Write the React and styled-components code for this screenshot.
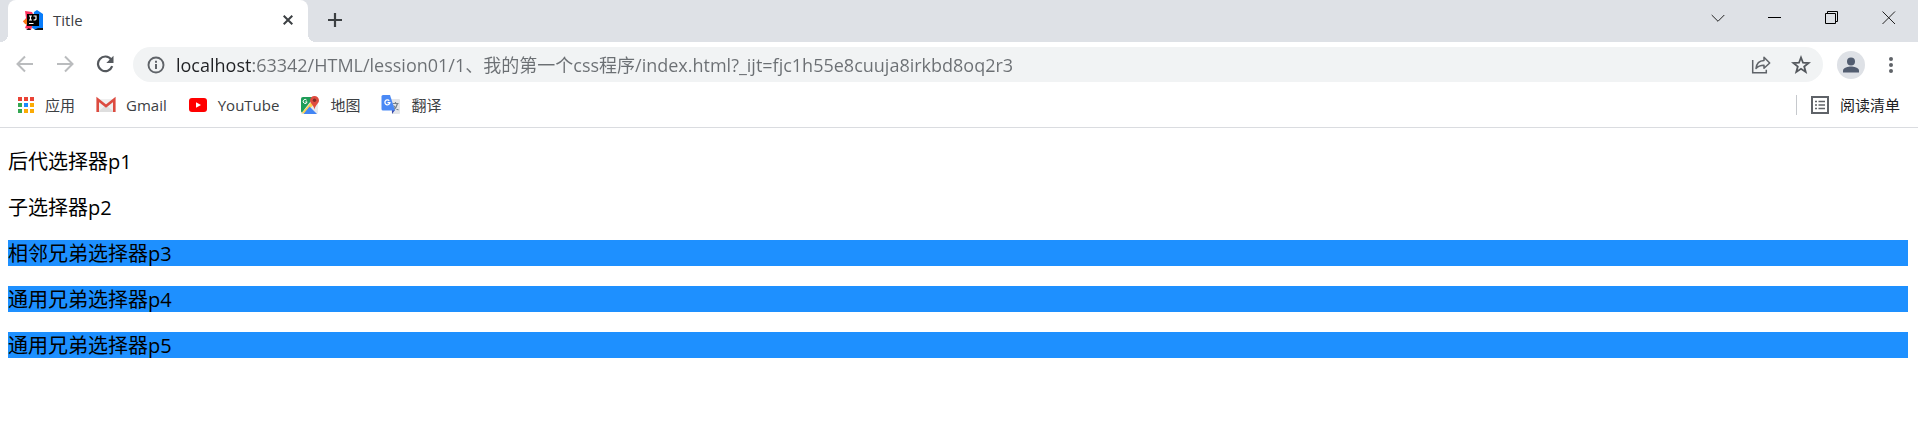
import React, { useState } from "react";
import styled, { createGlobalStyle } from "styled-components";

const bookmarks = [
  { name: "应用", icon: <AppsIcon /> },
  { name: "Gmail", icon: <GmailIcon /> },
  { name: "YouTube", icon: <YouTubeIcon /> },
  { name: "地图", icon: <MapsIcon /> },
  { name: "翻译", icon: <TranslateIcon /> },
];

const paragraphs = [
  { text: "后代选择器p1" },
  { text: "子选择器p2" },
  { text: "相邻兄弟选择器p3", selected: true },
  { text: "通用兄弟选择器p4", selected: true },
  { text: "通用兄弟选择器p5", selected: true },
];

const App = () => {
  const [url, setUrl] = useState(
    "localhost:63342/HTML/lession01/1、我的第一个css程序/index.html?_ijt=fjc1h55e8cuuja8irkbd8oq2r3"
  );

  return (
    <>
      <GlobalStyle />
      <TabStrip>
        <Tab>
          <IdeaIcon />
          <TabTitle>Title</TabTitle>
          <TabButton aria-label="关闭标签页">
            <svg width="10" height="10" viewBox="0 0 10 10">
              <path d="M.7.7l8.6 8.6M9.3.7L.7 9.3" stroke="#3c4043" strokeWidth="2" />
            </svg>
          </TabButton>
        </Tab>
        <NewTabButton aria-label="新标签页">
          <svg width="16" height="16" viewBox="0 0 16 16">
            <path d="M8 1v14M1 8h14" stroke="#3c4043" strokeWidth="2.2" />
          </svg>
        </NewTabButton>
        <WindowControls>
          <WindowButton aria-label="搜索标签页">
            <svg width="14" height="14" viewBox="0 0 14 14">
              <path d="M.7 4L7 10.3L13.3 4" fill="none" stroke="#222" />
            </svg>
          </WindowButton>
          <WindowButton aria-label="最小化">
            <svg width="14" height="14" viewBox="0 0 14 14">
              <path d="M0 6.5h13" stroke="#000" />
            </svg>
          </WindowButton>
          <WindowButton aria-label="还原">
            <svg width="14" height="14" viewBox="0 0 14 14">
              <path d="M.5 2.500h10v10H.5zM2.500 2.500v-2h10v10h-2" fill="none" stroke="#000" />
            </svg>
          </WindowButton>
          <WindowButton aria-label="关闭">
            <svg width="14" height="14" viewBox="0 0 14 14">
              <path d="M.5.5l12.500 12.500M13 .5L.5 13" stroke="#222" />
            </svg>
          </WindowButton>
        </WindowControls>
      </TabStrip>

      <Toolbar>
        <NavButton aria-label="后退">
          <svg width="18" height="18" viewBox="0 0 18 18">
            <path d="M17 9H2M9 1.500L1.500 9L9 16.500" fill="none" stroke="#babcbe" strokeWidth="2" />
          </svg>
        </NavButton>
        <NavButton aria-label="前进">
          <svg width="18" height="18" viewBox="0 0 18 18">
            <path d="M1 9h15M9 1.500L16.500 9L9 16.500" fill="none" stroke="#babcbe" strokeWidth="2" />
          </svg>
        </NavButton>
        <NavButton aria-label="重新加载">
          <svg width="18" height="18" viewBox="0 0 18 18">
            <path d="M15.200 4.500A7.300 7.300 0 1 0 16.200 11.200" fill="none" stroke="#54585d" strokeWidth="2.200" />
            <path d="M17.500 .8V8h-7.200z" fill="#54585d" />
          </svg>
        </NavButton>
        <AddressBar>
          <IconButton aria-label="查看网站信息">
            <svg width="18" height="18" viewBox="0 0 18 18">
              <circle cx="9" cy="9" r="7.500" fill="none" stroke="#5f6368" strokeWidth="1.900" />
              <path d="M9 8v5M9 4.800v2" stroke="#5f6368" strokeWidth="2" />
            </svg>
          </IconButton>
          <UrlInput
            aria-label="地址和搜索栏"
            spellCheck={false}
            value={url}
            onChange={(e) => setUrl(e.target.value)}
          />
          <IconButton aria-label="分享此网页">
            <svg width="20" height="18" viewBox="0 0 20 18">
              <path d="M1.700 4v12.800h13.600v-3" fill="none" stroke="#5f6368" strokeWidth="1.500" />
              <path d="M5 12.500C5.500 7.500 8.500 4.700 13 4.500V1.300L18.700 7L13 12.300V9.200C9.500 9.200 7 10 5 12.500z" fill="none" stroke="#5f6368" strokeWidth="1.500" strokeLinejoin="round" />
            </svg>
          </IconButton>
          <IconButton aria-label="为此标签页添加书签">
            <svg width="20" height="20" viewBox="0 0 20 20">
              <path d="M10 2.500l2 5.200 5.600.3-4.400 3.500 1.500 5.400L10 13.800l-4.700 3.100 1.500-5.400L2.400 8l5.600-.3z" fill="none" stroke="#54585d" strokeWidth="1.800" />
            </svg>
          </IconButton>
        </AddressBar>
        <Avatar aria-label="用户">
          <svg width="28" height="28" viewBox="0 0 28 28">
            <circle cx="14" cy="10.500" r="4" fill="#525d70" />
            <path d="M6 21.500v-2c0-2.700 5.300-4 8-4s8 1.300 8 4v2z" fill="#525d70" />
          </svg>
        </Avatar>
        <MenuButton aria-label="自定义及控制">
          <svg width="6" height="18" viewBox="0 0 6 18">
            <g fill="#5f6368">
              <circle cx="3" cy="3" r="2" />
              <circle cx="3" cy="9" r="2" />
              <circle cx="3" cy="15" r="2" />
            </g>
          </svg>
        </MenuButton>
      </Toolbar>

      <BookmarkBar>
        {bookmarks.map((item) => (
          <Bookmark href="#" key={item.name}>
            {item.icon}
            {item.name}
          </Bookmark>
        ))}
        <ReadingList>
          <svg width="18" height="18" viewBox="0 0 18 18">
            <rect x="1" y="1" width="16" height="16" fill="none" stroke="#5f6368" strokeWidth="2" />
            <path d="M4 5.500h2M4 9h2M4 12.500h2M7.500 5.500H14M7.500 9H14M7.500 12.500H14" stroke="#5f6368" strokeWidth="1.600" />
          </svg>
          阅读清单
        </ReadingList>
      </BookmarkBar>

      <Page>
        {paragraphs.map((p) => (
          <Paragraph key={p.text} $selected={p.selected}>
            {p.text}
          </Paragraph>
        ))}
      </Page>
    </>
  );
};

export default App;

function IdeaIcon() {
  return (
    <svg width="20" height="20" viewBox="0 0 20 20">
      <path d="M2 1l7 1 3 6-4 12-6-2 2-5-4-1 3-4z" fill="#fe315d" />
      <path d="M0 11l5-3v7l-3-1z" fill="#f97a12" />
      <path d="M11 2l3-2 6 4v14l-7 2-4-2z" fill="#087cfa" />
      <path d="M3 20l3-2 2 2zM11 20l4-2h5v2z" fill="#111" />
      <rect x="4" y="4" width="12" height="12" fill="#000" />
      <path d="M6 6h3M7.500 6v4M6 10h3M10.500 6h2.500v3q0 1-2.500 1M6 13.500h4.500" fill="none" stroke="#fff" strokeWidth="1.200" />
    </svg>
  );
}

function AppsIcon() {
  const colors = ["#ea4335", "#ea4335", "#ea4335", "#34a853", "#1a8cff", "#fbab05", "#34a853", "#fbab05", "#fbab05"];
  return (
    <svg width="18" height="18" viewBox="0 0 18 18">
      {colors.map((color, i) => (
        <rect key={i} x={1 + (i % 3) * 6} y={1 + Math.floor(i / 3) * 6} width="4" height="4" fill={color} />
      ))}
    </svg>
  );
}

function GmailIcon() {
  return (
    <svg width="20" height="20" viewBox="0 0 20 20">
      <path d="M2 4h16v13H2z" fill="#efefef" />
      <path d="M2 17l8-7 8 7z" fill="#dedede" />
      <path d="M1.700 17V4.500L10 11l8.300-6.500V17" fill="none" stroke="#dc4b40" strokeWidth="2.600" />
    </svg>
  );
}

function YouTubeIcon() {
  return (
    <svg width="20" height="20" viewBox="0 0 20 20">
      <rect x="1" y="3" width="18" height="14" rx="3" fill="#f00" />
      <path d="M8 7.200l5 2.800-5 2.800z" fill="#fff" />
    </svg>
  );
}

function MapsIcon() {
  return (
    <svg width="20" height="20" viewBox="0 0 20 20">
      <rect x="1" y="2" width="17" height="17" rx="2" fill="#e8eaed" />
      <path d="M3 2h11L2 17.500Q1 17 1 16V4q0-2 2-2z" fill="#1f9d58" />
      <path d="M14 4L1.500 18.500 5 18 16.500 7z" fill="#ffd04b" />
      <path d="M3.500 19L9.500 11.500 17 19z" fill="#4285f4" />
      <path d="M6.700 5.200a2 2 0 1 0 .4 1.700H5.300" fill="none" stroke="#fff" />
      <path d="M14.500 1a4.500 4.500 0 0 1 4.500 4.500c0 3-3.500 4-4.500 9-1-5-4.500-6-4.500-9A4.500 4.500 0 0 1 14.500 1z" fill="#df4b3f" />
      <circle cx="14.500" cy="5.300" r="1.700" fill="#7e2d25" />
    </svg>
  );
}

function TranslateIcon() {
  return (
    <svg width="20" height="20" viewBox="0 0 20 20">
      <path d="M8 4h10q1 0 1 1v13q0 1-1 1h-7z" fill="#e3e5e8" />
      <path d="M11.500 8.500h6M14.500 7v1.500M16.500 8.500q-1 4-4 6.500M12.500 10.500q2 3.500 5 4.500" fill="none" stroke="#74818c" strokeWidth="1.200" />
      <path d="M11 15h3l-3 4z" fill="#3949ab" />
      <path d="M2 0h7l5 15.500H2q-1.500 0-1.500-1.500V1.500Q.5 0 2 0z" fill="#4a89f5" />
      <path d="M8.300 5.700a2.500 2.500 0 1 0 .6 2H6.500" fill="none" stroke="#fff" strokeWidth="1.300" />
    </svg>
  );
}

const GlobalStyle = createGlobalStyle`
  * {
    box-sizing: border-box;
  }
  body {
    margin: 0;
    background-color: #fff;
    font-family: "Open Sans", "Noto Sans CJK SC", sans-serif;
  }
  svg {
    display: block;
    flex-shrink: 0;
  }
`;

const BaseButton = styled.button`
  display: flex;
  align-items: center;
  justify-content: center;
  flex-shrink: 0;
  padding: 0;
  border: none;
  background-color: transparent;
  font-family: inherit;
  cursor: pointer;
`;

const TabStrip = styled.header`
  display: flex;
  height: 42px;
  padding-left: 8px;
  background-color: #dee1e6;
`;

const Tab = styled.div`
  position: relative;
  display: flex;
  align-items: center;
  width: 300px;
  padding: 0 12px 2px 15px;
  border-radius: 8px 8px 0 0;
  background-color: #fff;

  &::before,
  &::after {
    content: "";
    position: absolute;
    bottom: 0;
    width: 8px;
    height: 8px;
  }
  &::before {
    right: 100%;
    background: radial-gradient(circle at 0 0, transparent 8px, #fff 8px);
  }
  &::after {
    left: 100%;
    background: radial-gradient(circle at 100% 0, transparent 8px, #fff 8px);
  }
`;

const TabTitle = styled.span`
  flex: 1;
  padding-left: 10px;
  font-size: 15px;
  line-height: 20px;
  color: #3c4043;
`;

const TabButton = styled(BaseButton)`
  width: 16px;
  height: 16px;
`;

const NewTabButton = styled(BaseButton)`
  width: 36px;
  height: 40px;
  margin-left: 9px;
`;

const WindowControls = styled.div`
  display: flex;
  margin-left: auto;
  padding-right: 1px;
`;

const WindowButton = styled(BaseButton)`
  width: 57px;
  height: 36px;
`;

const Toolbar = styled.div`
  display: flex;
  align-items: center;
  height: 42px;
  padding: 5px 17px 2px 5px;
`;

const NavButton = styled(BaseButton)`
  width: 40px;
  height: 36px;
  padding-bottom: 2px;
`;

const AddressBar = styled.div`
  display: flex;
  flex: 1;
  align-items: center;
  gap: 20px;
  height: 35px;
  margin: 0 14px 0 8px;
  padding: 0 12px 0 14px;
  border-radius: 18px;
  background-color: #f1f3f4;
`;

const IconButton = styled(BaseButton)`
  height: 28px;
`;

/* the host part is darker than the rest of the address */
const UrlInput = styled.input`
  flex: 1;
  min-width: 0;
  height: 32px;
  margin-left: -9px;
  padding: 0 0 2px;
  border: none;
  outline: none;
  background: linear-gradient(to right, #202124 77px, #6b6f73 77px);
  background-clip: text;
  -webkit-text-fill-color: transparent;
  font-family: inherit;
  font-size: 18px;
`;

const Avatar = styled(BaseButton)`
  width: 28px;
  height: 28px;
  border-radius: 50%;
  background-color: #dee1e6;
`;

const MenuButton = styled(BaseButton)`
  width: 20px;
  height: 28px;
  margin-left: 16px;
`;

const BookmarkBar = styled.nav`
  display: flex;
  align-items: center;
  gap: 21px;
  height: 44px;
  padding: 0 18px 2px 17px;
  border-bottom: 1px solid #dadce0;
`;

const Bookmark = styled.a`
  display: flex;
  align-items: center;
  gap: 10px;
  font-size: 15px;
  line-height: 20px;
  color: #3c4043;
  text-decoration: none;
`;

const ReadingList = styled(BaseButton)`
  gap: 11px;
  height: 20px;
  margin-left: auto;
  padding-left: 14px;
  border-left: 1px solid #c6c9cd;
  font-size: 15px;
  color: #202124;
`;

const Page = styled.main`
  padding: 0 10px 0 8px;
`;

const Paragraph = styled.p`
  margin: 20px 0;
  padding-top: 2px;
  background-color: ${({ $selected }) => ($selected ? "dodgerblue" : "transparent")};
  font-size: 20px;
  line-height: 24px;
  color: #000;
`;
